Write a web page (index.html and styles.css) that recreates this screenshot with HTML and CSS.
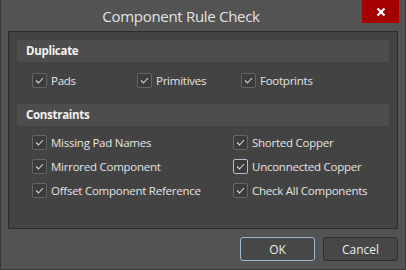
FILE: index.html
```html
<!DOCTYPE html>
<html lang="en">
<head>
    <meta charset="UTF-8">
    <title>Component Rule Check</title>
    <link rel="stylesheet" href="styles.css">
</head>
<body>
    <div class="dialog">
        <div class="titlebar">
            <span class="title">Component Rule Check</span>
            <button class="close">
                <svg width="10" height="10" viewBox="0 0 10 10"><path d="M1.5 1.5 L8.5 8.5 M8.5 1.5 L1.5 8.5" stroke="#fff" stroke-width="2.2"/></svg>
            </button>
        </div>
        <div class="panel">
            <div class="section-head">Duplicate</div>
            <div class="row-dup">
                <label class="check"><span class="box"><svg width="9" height="7" viewBox="0 0 9 7"><path d="M1 3.5 L3.5 6 L8 1" fill="none" stroke="#d8d8d8" stroke-width="1.1"/></svg></span>Pads</label>
                <label class="check"><span class="box"><svg width="9" height="7" viewBox="0 0 9 7"><path d="M1 3.5 L3.5 6 L8 1" fill="none" stroke="#d8d8d8" stroke-width="1.1"/></svg></span>Primitives</label>
                <label class="check"><span class="box"><svg width="9" height="7" viewBox="0 0 9 7"><path d="M1 3.5 L3.5 6 L8 1" fill="none" stroke="#d8d8d8" stroke-width="1.1"/></svg></span>Footprints</label>
            </div>
            <div class="section-head">Constraints</div>
            <div class="grid-con">
                <label class="check"><span class="box"><svg width="9" height="7" viewBox="0 0 9 7"><path d="M1 3.5 L3.5 6 L8 1" fill="none" stroke="#d8d8d8" stroke-width="1.1"/></svg></span>Missing Pad Names</label>
                <label class="check"><span class="box"><svg width="9" height="7" viewBox="0 0 9 7"><path d="M1 3.5 L3.5 6 L8 1" fill="none" stroke="#d8d8d8" stroke-width="1.1"/></svg></span>Shorted Copper</label>
                <label class="check"><span class="box"><svg width="9" height="7" viewBox="0 0 9 7"><path d="M1 3.5 L3.5 6 L8 1" fill="none" stroke="#d8d8d8" stroke-width="1.1"/></svg></span>Mirrored Component</label>
                <label class="check"><span class="box focus"><svg width="9" height="7" viewBox="0 0 9 7"><path d="M1 3.5 L3.5 6 L8 1" fill="none" stroke="#d8d8d8" stroke-width="1.1"/></svg></span>Unconnected Copper</label>
                <label class="check"><span class="box"><svg width="9" height="7" viewBox="0 0 9 7"><path d="M1 3.5 L3.5 6 L8 1" fill="none" stroke="#d8d8d8" stroke-width="1.1"/></svg></span>Offset Component Reference</label>
                <label class="check"><span class="box"><svg width="9" height="7" viewBox="0 0 9 7"><path d="M1 3.5 L3.5 6 L8 1" fill="none" stroke="#d8d8d8" stroke-width="1.1"/></svg></span>Check All Components</label>
            </div>
        </div>
        <div class="buttons">
            <button class="btn default">OK</button>
            <button class="btn">Cancel</button>
        </div>
    </div>
</body>
</html>
```
FILE: styles.css
```css
body { margin: 0; background: #535353; font-family: 'Open Sans', 'Noto Sans', sans-serif; }
.dialog { width: 406px; height: 270px; box-sizing: border-box; background: #535353; border: 1px solid #3a3a3a; border-top: none; }
.titlebar { height: 31px; position: relative; display: flex; justify-content: center; align-items: center; }
.title { color: #e2e2e2; font-size: 15px; letter-spacing: -0.3px; margin-left: -44px; }
.close { position: absolute; top: 0; right: 6px; width: 37px; height: 23px; background: #a50000; border: none; padding: 0; display: flex; align-items: center; justify-content: center; }
.panel { margin: 0 7px; height: 198px; box-sizing: border-box; background: #434343; border: 1px solid #2b2b2b; padding: 8px; }
.section-head { height: 22px; background: #4d4d4d; color: #f2f2f2; font-weight: bold; font-size: 11.5px; letter-spacing: -0.3px; line-height: 22px; padding-left: 9px; }
.row-dup { display: grid; grid-template-columns: 105px 104px 1fr; padding: 10px 0 16px 15px; }
.grid-con { display: grid; grid-template-columns: 201px 1fr; row-gap: 8px; padding: 8px 0 0 15px; }
.check { display: flex; align-items: center; color: #e4e4e4; font-size: 11.5px; letter-spacing: -0.25px; height: 16px; }
.box { width: 13px; height: 13px; border: 1px solid #656565; border-radius: 2px; background: #3c3c3c; margin-right: 4px; display: flex; align-items: center; justify-content: center; }
.box.focus { border-color: #a9c3de; }
.buttons { display: flex; justify-content: flex-end; gap: 8px; padding: 8px 7px 0 0; }
.btn { width: 75px; height: 24px; background: #474747; border: 1px solid #2e2e2e; border-radius: 3px; color: #ececec; font-family: inherit; font-size: 12px; }
.btn.default { border-color: #9fb8d2; }
```
